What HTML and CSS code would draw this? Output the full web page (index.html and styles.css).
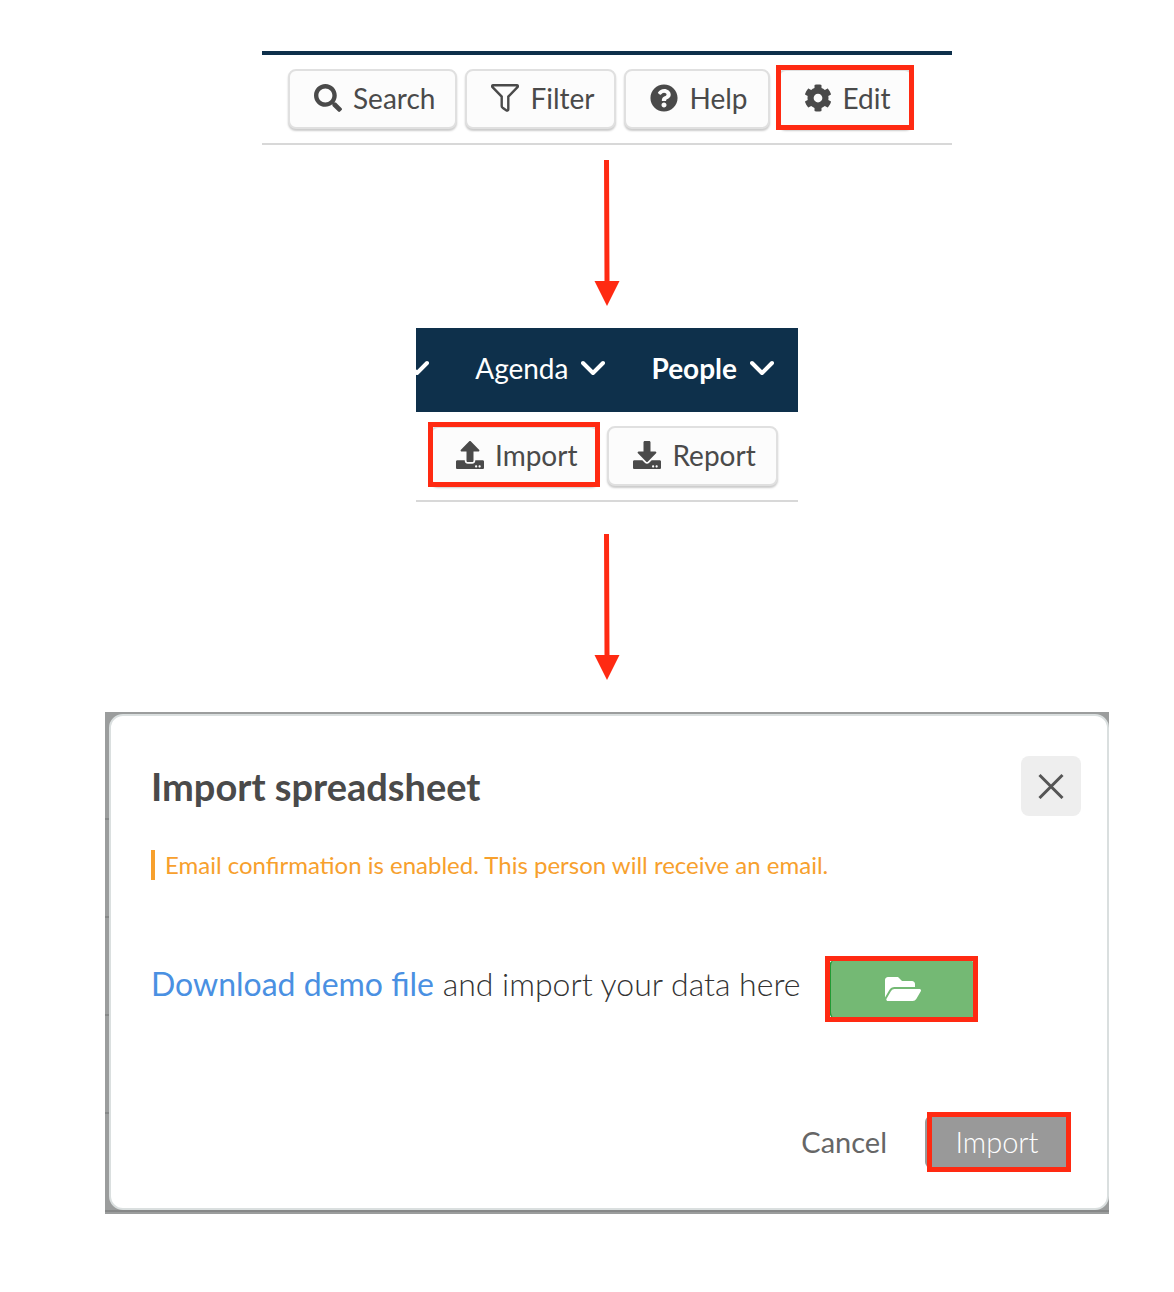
FILE: index.html
```html
<!DOCTYPE html>
<html lang="en">
<head>
    <meta charset="UTF-8">
    <title>Import spreadsheet</title>
    <link rel="stylesheet" href="styles.css">
</head>
<body>
<main class="steps">

    <!-- step 1: page toolbar -->
    <section class="panel panel-edit">
        <div class="toolbar">
            <button type="button" class="btn">
                <svg class="icon" viewBox="0 0 512 512"><path d="M505 442.7L405.3 343c-4.5-4.5-10.6-7-17-7H372c27.6-35.3 44-79.7 44-128C416 93.1 322.9 0 208 0S0 93.1 0 208s93.1 208 208 208c48.3 0 92.7-16.4 128-44v16.3c0 6.4 2.5 12.5 7 17l99.7 99.7c9.4 9.4 24.6 9.4 33.9 0l28.3-28.3c9.4-9.4 9.4-24.6.1-34zM208 336c-70.7 0-128-57.2-128-128 0-70.7 57.2-128 128-128 70.7 0 128 57.2 128 128 0 70.7-57.2 128-128 128z"/></svg>
                Search
            </button>
            <button type="button" class="btn">
                <svg class="icon icon-line" viewBox="0 0 28 28"><path d="M2.2 1.2H25.8C27 1.2 27.3 2.4 26.5 3.2L17.3 12.6V25.2C17.3 26.5 16.2 27 15.2 26.3L11.6 23.7C11 23.2 10.7 22.7 10.7 22V12.6L1.5 3.2C.7 2.4 1 1.2 2.2 1.2Z"/></svg>
                Filter
            </button>
            <button type="button" class="btn">
                <svg class="icon" viewBox="0 0 512 512"><path d="M504 256c0 136.997-111.043 248-248 248S8 392.997 8 256C8 119.083 119.043 8 256 8s248 111.083 248 248zM262.655 90c-54.497 0-89.255 22.957-116.549 63.758-3.536 5.286-2.353 12.415 2.715 16.258l34.699 26.31c5.205 3.947 12.621 3.008 16.665-2.122 17.864-22.658 30.113-35.797 57.303-35.797 20.429 0 45.698 13.148 45.698 32.958 0 14.976-12.363 22.667-32.534 33.976C247.128 238.528 216 254.941 216 296v4c0 6.627 5.373 12 12 12h56c6.627 0 12-5.373 12-12v-1.333c0-28.462 83.186-29.647 83.186-106.667 0-58.002-60.165-102-116.531-102zM256 338c-25.365 0-46 20.635-46 46 0 25.364 20.635 46 46 46s46-20.636 46-46c0-25.365-20.635-46-46-46z"/></svg>
                Help
            </button>
            <button type="button" class="btn marked">
                <svg class="icon" viewBox="0 0 512 512"><path d="M487.4 315.7l-42.6-24.6c4.3-23.2 4.3-47 0-70.2l42.6-24.6c4.9-2.8 7.1-8.6 5.5-14-11.1-35.6-30-67.8-54.7-94.6-3.8-4.1-10-5.1-14.8-2.3L380.8 110c-17.9-15.4-38.5-27.3-60.8-35.1V25.8c0-5.6-3.9-10.5-9.4-11.7-36.7-8.2-74.3-7.8-109.2 0-5.5 1.2-9.4 6.1-9.4 11.7V75c-22.2 7.9-42.8 19.8-60.8 35.1L88.7 85.5c-4.9-2.8-11-1.9-14.8 2.3-24.7 26.7-43.6 58.9-54.7 94.6-1.7 5.4.6 11.2 5.5 14L67.3 221c-4.3 23.2-4.3 47 0 70.2l-42.6 24.6c-4.9 2.8-7.1 8.6-5.5 14 11.1 35.6 30 67.8 54.7 94.6 3.8 4.1 10 5.1 14.8 2.3l42.6-24.6c17.9 15.4 38.5 27.3 60.8 35.1v49.2c0 5.6 3.9 10.5 9.4 11.7 36.7 8.2 74.3 7.8 109.2 0 5.5-1.2 9.4-6.1 9.4-11.7v-49.2c22.2-7.9 42.8-19.8 60.8-35.1l42.6 24.6c4.9 2.8 11 1.9 14.8-2.3 24.7-26.7 43.6-58.9 54.7-94.6 1.5-5.5-.7-11.3-5.6-14.1zM256 336c-44.1 0-80-35.9-80-80s35.9-80 80-80 80 35.9 80 80-35.9 80-80 80z"/></svg>
                Edit
            </button>
        </div>
    </section>

    <svg class="arrow" viewBox="0 0 26 146"><path d="M10 0H15L15.500 121H25.500L13 146L.5 121H10.500Z"/></svg>

    <!-- step 2: people page -->
    <section class="panel panel-people">
        <nav class="nav">
            <a class="nav-item" href="#" aria-label="Menu">
                <svg class="chevron" viewBox="0 0 24 16"><path d="M2 3L12 13L22 3"/></svg>
            </a>
            <a class="nav-item" href="#">Agenda
                <svg class="chevron" viewBox="0 0 24 16"><path d="M2 3L12 13L22 3"/></svg>
            </a>
            <a class="nav-item active" href="#">People
                <svg class="chevron" viewBox="0 0 24 16"><path d="M2 3L12 13L22 3"/></svg>
            </a>
        </nav>
        <div class="toolbar">
            <button type="button" class="btn marked">
                <svg class="icon" viewBox="0 0 512 512"><path d="M296 384h-80c-13.3 0-24-10.7-24-24V192h-87.7c-17.8 0-26.7-21.5-14.1-34.1L242.3 5.7c7.5-7.5 19.8-7.5 27.3 0l152.2 152.2c12.6 12.6 3.7 34.1-14.1 34.1H320v168c0 13.3-10.7 24-24 24zm216-8v112c0 13.3-10.7 24-24 24H24c-13.3 0-24-10.7-24-24V376c0-13.3 10.7-24 24-24h136v8c0 30.9 25.1 56 56 56h80c30.9 0 56-25.1 56-56v-8h136c13.3 0 24 10.7 24 24zm-124 88c0-11-9-20-20-20s-20 9-20 20 9 20 20 20 20-9 20-20zm64 0c0-11-9-20-20-20s-20 9-20 20 9 20 20 20 20-9 20-20z"/></svg>
                Import
            </button>
            <button type="button" class="btn">
                <svg class="icon" viewBox="0 0 512 512"><path d="M216 0h80c13.3 0 24 10.7 24 24v168h87.7c17.8 0 26.7 21.5 14.1 34.1L269.7 378.3c-7.5 7.5-19.8 7.5-27.3 0L90.1 226.1c-12.6-12.6-3.7-34.1 14.1-34.1H192V24c0-13.3 10.7-24 24-24zm296 376v112c0 13.3-10.7 24-24 24H24c-13.3 0-24-10.7-24-24V376c0-13.3 10.7-24 24-24h146.7l49 49c20.1 20.1 52.5 20.1 72.6 0l49-49H488c13.3 0 24 10.7 24 24zm-124 88c0-11-9-20-20-20s-20 9-20 20 9 20 20 20 20-9 20-20zm64 0c0-11-9-20-20-20s-20 9-20 20 9 20 20 20 20-9 20-20z"/></svg>
                Report
            </button>
        </div>
    </section>

    <svg class="arrow" viewBox="0 0 26 146"><path d="M10 0H15L15.500 121H25.500L13 146L.5 121H10.500Z"/></svg>

    <!-- step 3: import dialog -->
    <section class="backdrop">
        <div class="dialog" role="dialog" aria-labelledby="dialog-title">
            <header class="dialog-head">
                <h2 class="dialog-title" id="dialog-title">Import spreadsheet</h2>
                <button type="button" class="close" aria-label="Close">
                    <svg class="close-icon" viewBox="0 0 26 26"><path d="M1.500 2L24.500 25M24.500 2L1.500 25"/></svg>
                </button>
            </header>
            <p class="notice">Email confirmation is enabled. This person will receive an email.</p>
            <div class="file-row">
                <p class="file-text"><a class="link" href="#">Download demo file</a> and import your data here</p>
                <button type="button" class="browse marked" aria-label="Choose file">
                    <svg class="folder" viewBox="0 0 576 512"><path d="M572.694 292.093L500.27 416.248A63.997 63.997 0 0 1 444.989 448H45.025c-18.523 0-30.064-20.093-20.731-36.093l72.424-124.155A64 64 0 0 1 152 256h399.964c18.523 0 30.064 20.093 20.73 36.093zM152 224h328v-48c0-26.510-21.490-48-48-48H272l-64-64H48C21.490 64 0 85.490 0 112v278.046l69.077-118.418C86.214 242.250 117.989 224 152 224z"/></svg>
                </button>
            </div>
            <footer class="dialog-foot">
                <button type="button" class="cancel">Cancel</button>
                <button type="button" class="submit marked">Import</button>
            </footer>
        </div>
    </section>

</main>
</body>
</html>
```
FILE: styles.css
```css
* {
    box-sizing: border-box;
}

body {
    margin: 0;
    background: #fff;
    color: #4a4a4a;
    font: 400 28px/36px Lato, "Liberation Sans", sans-serif;
}

button {
    font: inherit;
    color: inherit;
    border: 0;
    cursor: pointer;
}

.steps {
    display: flex;
    flex-direction: column;
    align-items: center;
    padding: 51px 0 78px 40px;
}

.panel {
    width: 100%;
    border-bottom: 2px solid #d8d8d8;
}

.panel-edit {
    max-width: 690px;
    border-top: 4px solid #0e304b;
}

.panel-people {
    max-width: 382px;
    margin-top: 22px;
}

/* toolbar */
.toolbar {
    display: flex;
    gap: 8px;
    padding: 14px 26px;
}

.panel-people .toolbar {
    padding: 14px 14px;
}

.btn {
    display: flex;
    align-items: center;
    gap: 11px;
    height: 60px;
    padding: 0 20px 2px 24px;
    background: #fcfcfc;
    border: 2px solid #e0e0e0;
    border-radius: 8px;
    box-shadow: 0 2px 2px #ccc;
}

.icon {
    width: 28px;
    height: 28px;
    fill: #4a4a4a;
}

.icon-line {
    fill: none;
    stroke: #4a4a4a;
    stroke-width: 2.4;
}

/* red frame around the button to click */
.marked {
    position: relative;
}

.marked:after {
    content: '';
    position: absolute;
    top: -6px;
    right: -3px;
    bottom: -3px;
    left: -4px;
    border: 5px solid #ff2a12;
}

.arrow {
    width: 26px;
    height: 146px;
    margin-top: 15px;
    fill: #ff2a12;
}

.panel-people + .arrow {
    margin-top: 32px;
}

/* nav */
.nav {
    display: flex;
    justify-content: flex-end;
    align-items: center;
    gap: 46px;
    height: 84px;
    padding: 0 24px 5px 0;
    background: #0e304b;
    overflow: hidden;
}

.nav-item {
    display: flex;
    align-items: center;
    gap: 13px;
    color: #fff;
    text-decoration: none;
}

.nav-item.active {
    font-weight: bold;
}

.chevron {
    flex: none;
    width: 24px;
    height: 16px;
    fill: none;
    stroke: #fff;
    stroke-width: 4;
    stroke-linecap: round;
    stroke-linejoin: round;
}

/* dialog */
.backdrop {
    width: 100%;
    max-width: 1004px;
    margin-top: 32px;
    padding: 2px 0 4px 4px;
    background: repeating-linear-gradient(#9b9d9d 0, #9b9d9d 96px, #868888 96px, #868888 98px) 0 10px;
}

.dialog {
    padding: 40px 26px 40px 40px;
    background: #fff;
    border: 2px solid #dadfdf;
    border-radius: 14px;
}

.dialog-head {
    display: flex;
    justify-content: space-between;
    align-items: center;
}

.dialog-title {
    margin: 0;
    font-size: 38px;
    font-weight: bold;
}

.close {
    width: 60px;
    height: 60px;
    padding: 17px;
    background: #eee;
    border-radius: 8px;
}

.close-icon {
    display: block;
    width: 26px;
    height: 26px;
    fill: none;
    stroke: #555;
    stroke-width: 3;
}

.notice {
    margin: 34px 0 0;
    padding-left: 10px;
    border-left: 4px solid #f7a02d;
    color: #f7a02d;
    font-size: 24px;
    line-height: 30px;
}

.file-row {
    display: flex;
    align-items: center;
    gap: 28px;
    margin-top: 80px;
}

.file-text {
    margin: 0;
    padding-bottom: 10px;
    color: #333;
    font-size: 32px;
    font-weight: 300;
}

.link {
    color: #4a90e2;
    font-weight: 400;
    text-decoration: none;
}

.browse {
    display: flex;
    justify-content: center;
    align-items: center;
    width: 146px;
    height: 58px;
    background: #74b974;
    border-left: 2px solid #229a35;
    border-radius: 6px;
}

.browse:after,
.submit:after {
    top: -4px;
    bottom: -4px;
}

.browse:after {
    left: -6px;
}

.folder {
    width: 36px;
    height: 32px;
    fill: #fff;
}

.dialog-foot {
    display: flex;
    justify-content: flex-end;
    gap: 38px;
    margin-top: 98px;
    padding-right: 12px;
}

.cancel,
.submit {
    height: 52px;
    padding: 0;
    font-size: 29px;
}

.cancel {
    background: none;
    color: #666;
}

.submit {
    width: 144px;
    background: #999;
    border-radius: 6px;
    color: #fff;
    font-weight: 300;
}

.submit:after {
    right: -2px;
    left: 2px;
}
```
